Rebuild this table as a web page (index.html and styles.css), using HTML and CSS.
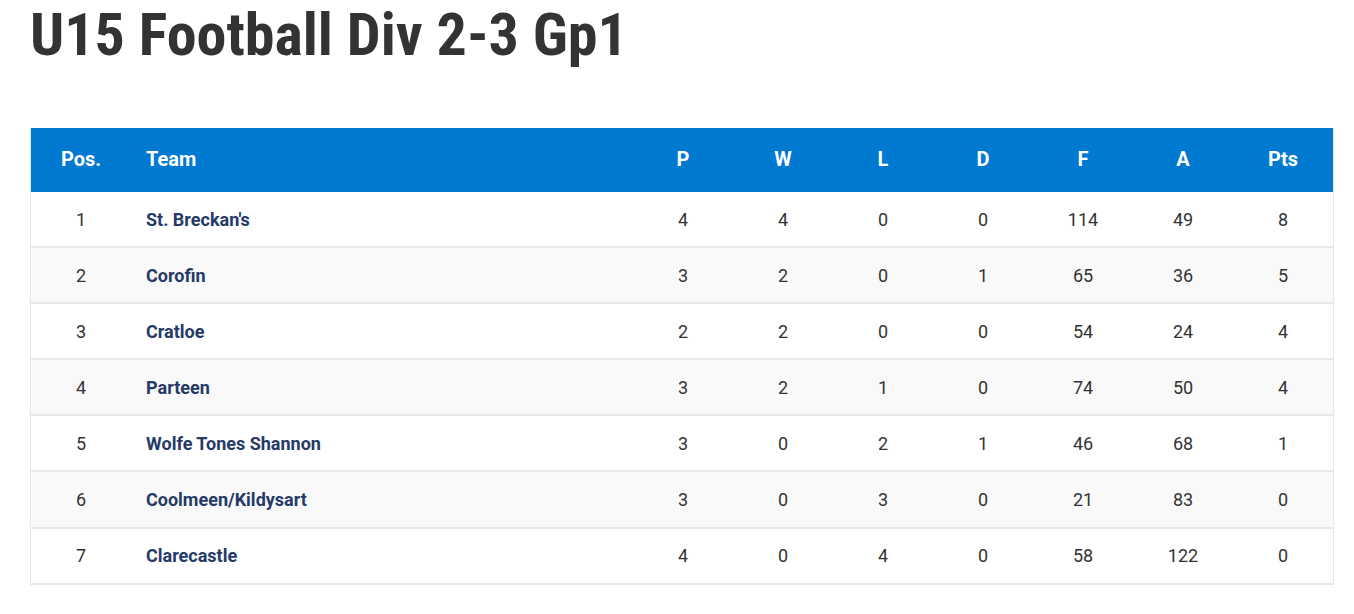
FILE: index.html
```html
<!DOCTYPE html>
<html lang="en">
<head>
  <meta charset="UTF-8" />
  <title>U15 Football Div 2-3 Gp1</title>
  <link rel="stylesheet" href="styles.css">
</head>
<body>
  <h1 class="title">U15 Football Div 2-3 Gp1</h1>
  <table class="league">
    <thead>
      <tr>
        <th class="pos">Pos.</th>
        <th class="team">Team</th>
        <th>P</th>
        <th>W</th>
        <th>L</th>
        <th>D</th>
        <th>F</th>
        <th>A</th>
        <th>Pts</th>
      </tr>
    </thead>
    <tbody>
      <tr><td class="pos">1</td><td class="team">St. Breckan's</td><td>4</td><td>4</td><td>0</td><td>0</td><td>114</td><td>49</td><td>8</td></tr>
      <tr><td class="pos">2</td><td class="team">Corofin</td><td>3</td><td>2</td><td>0</td><td>1</td><td>65</td><td>36</td><td>5</td></tr>
      <tr><td class="pos">3</td><td class="team">Cratloe</td><td>2</td><td>2</td><td>0</td><td>0</td><td>54</td><td>24</td><td>4</td></tr>
      <tr><td class="pos">4</td><td class="team">Parteen</td><td>3</td><td>2</td><td>1</td><td>0</td><td>74</td><td>50</td><td>4</td></tr>
      <tr><td class="pos">5</td><td class="team">Wolfe Tones Shannon</td><td>3</td><td>0</td><td>2</td><td>1</td><td>46</td><td>68</td><td>1</td></tr>
      <tr><td class="pos">6</td><td class="team">Coolmeen/Kildysart</td><td>3</td><td>0</td><td>3</td><td>0</td><td>21</td><td>83</td><td>0</td></tr>
      <tr><td class="pos">7</td><td class="team">Clarecastle</td><td>4</td><td>0</td><td>4</td><td>0</td><td>58</td><td>122</td><td>0</td></tr>
    </tbody>
  </table>
</body>
</html>
```

FILE: styles.css
```css
html, body {
  margin: 0;
}
body {
  font-family: Roboto, "Liberation Sans", sans-serif;
  background: #fff;
  color: #333;
  padding: 0 20px 0 30px;
}
.title {
  margin: 0;
  font-size: 60px;
  line-height: 70px;
  font-weight: 700;
  font-stretch: condensed;
  color: #333;
  white-space: nowrap;
}
.league {
  margin-top: 58px;
  width: 1304px;
  border-collapse: collapse;
  border-left: 1px solid #e8e8e8;
  border-right: 1px solid #e8e8e8;
}
.league th {
  background: #0079d0;
  color: #fff;
  font-size: 20px;
  font-weight: 700;
  height: 61px;
  padding: 0 0 3px;
  text-align: center;
  width: 100px;
}
.league td {
  font-size: 18px;
  height: 54.1px;
  padding: 0;
  text-align: center;
  border-bottom: 2px solid #e8e8e8;
  width: 100px;
}
.league .pos {
  width: 100px;
}
.league .team {
  width: auto;
  text-align: left;
  padding-left: 15px;
}
.league td.team {
  font-weight: 700;
  color: #253a66;
}
.league tbody tr:nth-child(even) td {
  background: #f9f9f9;
}
```
